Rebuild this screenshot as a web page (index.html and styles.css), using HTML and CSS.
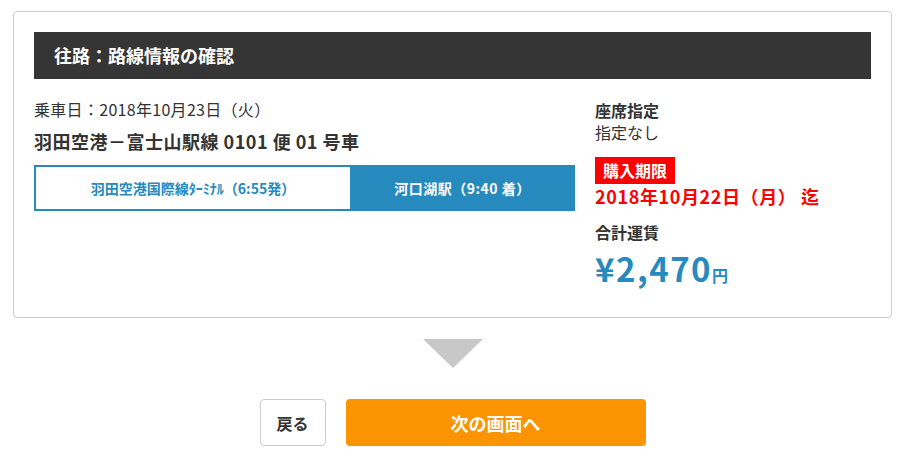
FILE: index.html
```html
<!DOCTYPE html>
<html lang="ja">
<head>
  <meta charset="UTF-8">
  <meta name="viewport" content="width=device-width, initial-scale=1.0">
  <title>路線情報の確認</title>
  <link rel="stylesheet" href="styles.css">
</head>
<body>
  <main class="page">
    <!-- Route summary card -->
    <section class="card">
      <h2 class="card-title">往路：路線情報の確認</h2>
      <div class="card-body">
        <div class="route">
          <p class="ride-date">乗車日：2018年10月23日（火）</p>
          <p class="route-name">羽田空港－富士山駅線 0101 便 01 号車</p>
          <div class="route-stops">
            <div class="stop stop-from">羽田空港国際線ﾀｰﾐﾅﾙ（6:55発）</div>
            <div class="stop stop-to">河口湖駅（9:40 着）</div>
          </div>
        </div>
        <div class="summary">
          <p class="label">座席指定</p>
          <p class="value">指定なし</p>
          <p class="badge">購入期限</p>
          <p class="deadline">2018年10月22日（月） 迄</p>
          <p class="label fare-label">合計運賃</p>
          <p class="fare">¥2,470<span class="yen">円</span></p>
        </div>
      </div>
    </section>

    <div class="arrow"></div>

    <div class="actions">
      <button class="btn btn-back" type="button">戻る</button>
      <button class="btn btn-next" type="button">次の画面へ</button>
    </div>
  </main>
</body>
</html>
```

FILE: styles.css
```css
body {
  margin: 0;
  font-family: "Noto Sans CJK JP", "Noto Sans", sans-serif;
  color: #333333;
  background-color: #ffffff;
}
p {
  margin: 0;
}
.page {
  width: 879px;
  padding: 11px 0 0 13px;
}
.card {
  border: 1px solid #cccccc;
  border-radius: 4px;
  padding: 20px 20px 31px;
}
.card-title {
  margin: 0;
  height: 47px;
  line-height: 47px;
  padding-left: 20px;
  background-color: #353535;
  color: #ffffff;
  font-size: 18px;
  font-weight: bold;
}
.card-body {
  display: grid;
  grid-template-columns: 541px 1fr;
  gap: 20px;
}
.ride-date {
  margin-top: 20px;
  font-size: 16px;
  line-height: 21px;
  letter-spacing: 0.3px;
}
.route-name {
  margin-top: 9px;
  font-size: 18px;
  font-weight: bold;
  line-height: 25px;
  letter-spacing: 0.5px;
}
.route-stops {
  display: flex;
  margin-top: 11px;
  height: 46px;
}
.stop {
  display: flex;
  align-items: center;
  justify-content: center;
  font-size: 14px;
  font-weight: bold;
  box-sizing: border-box;
}
.stop-from {
  width: 316px;
  border: 2px solid #268abe;
  border-right: none;
  color: #268abe;
}
.stop-to {
  flex: 1;
  background-color: #268abe;
  color: #ffffff;
  letter-spacing: 0.5px;
}
.summary .label {
  margin-top: 20px;
  font-size: 16px;
  font-weight: bold;
  line-height: 22px;
}
.summary .value {
  font-size: 16px;
  line-height: 22px;
}
.badge {
  width: fit-content;
  margin-top: 14px;
  padding: 0 8px;
  height: 27px;
  line-height: 27px;
  background-color: #ff0000;
  color: #ffffff;
  font-size: 16px;
  font-weight: bold;
}
.deadline {
  color: #ff0000;
  font-size: 18px;
  font-weight: bold;
  line-height: 25px;
  letter-spacing: 0.6px;
}
.summary .fare-label {
  margin-top: 11px;
  line-height: 24px;
}
.fare {
  margin-top: 6px;
  color: #268abe;
  font-size: 33px;
  font-weight: bold;
  line-height: 36px;
  letter-spacing: 1.5px;
}
.yen {
  font-size: 16px;
  line-height: 1;
  letter-spacing: 0;
}
.arrow {
  width: 0;
  height: 0;
  margin: 21px auto 0;
  border-left: 30px solid transparent;
  border-right: 30px solid transparent;
  border-top: 29px solid #c8c8c8;
}
.actions {
  display: flex;
  justify-content: center;
  gap: 20px;
  margin-top: 31px;
}
.btn {
  height: 47px;
  border-radius: 4px;
  font-family: inherit;
  font-size: 16px;
  font-weight: bold;
  cursor: pointer;
}
.btn-back {
  width: 66px;
  background-color: #ffffff;
  border: 1px solid #cccccc;
  color: #333333;
}
.btn-next {
  width: 300px;
  background-color: #fb9400;
  border: none;
  color: #ffffff;
  font-size: 18px;
}
```
